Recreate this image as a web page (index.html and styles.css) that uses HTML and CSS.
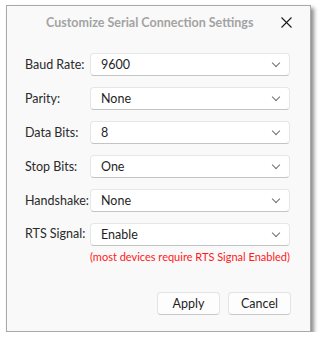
FILE: index.html
```html
<!DOCTYPE html>
<html lang="en">
<head>
  <meta charset="UTF-8" />
  <title>Customize Serial Connection Settings</title>
  <link rel="stylesheet" href="styles.css">
</head>
<body>
  <div class="ventana">
    <div class="barra">
      <span class="titulo">Customize Serial Connection Settings</span>
      <span class="cerrar">
        <svg width="11" height="11" viewBox="0 0 11 11">
          <path d="M0.5 0.5 L10.5 10.5 M10.5 0.5 L0.5 10.5" stroke="#1a1a1a" stroke-width="1.1" fill="none" />
        </svg>
      </span>
    </div>

    <div class="formulario">
      <label>Baud Rate:</label>
      <div class="combo"><span>9600</span><i class="flecha"></i></div>

      <label>Parity:</label>
      <div class="combo"><span>None</span><i class="flecha"></i></div>

      <label>Data Bits:</label>
      <div class="combo"><span>8</span><i class="flecha"></i></div>

      <label>Stop Bits:</label>
      <div class="combo"><span>One</span><i class="flecha"></i></div>

      <label>Handshake:</label>
      <div class="combo"><span>None</span><i class="flecha"></i></div>

      <label class="arriba">RTS Signal:</label>
      <div class="grupo">
        <div class="combo"><span>Enable</span><i class="flecha"></i></div>
        <p class="aviso">(most devices require RTS Signal Enabled)</p>
      </div>
    </div>

    <div class="botones">
      <button>Apply</button>
      <button>Cancel</button>
    </div>
  </div>
</body>
</html>
```

FILE: styles.css
```css
* {
  box-sizing: border-box;
  margin: 0;
  padding: 0;
  font-family: 'Lato', sans-serif;
}

body {
  background: #ffffff;
  color: #1f1f1f;
  font-size: 12.5px;
}

.ventana {
  margin: 5px 0 0 6px;
  width: 305px;
  height: 327px;
  background-color: #f9f9f9;
  border: 1px solid #a9a9a9;
  box-shadow: 3px 3px 4px rgba(0, 0, 0, 0.45);
  display: flex;
  flex-direction: column;
}

.barra {
  flex-shrink: 0;
  height: 47px;
  display: flex;
  align-items: center;
  padding: 0 0 14px 39px;
}

.titulo {
  flex: 1;
  font-weight: bold;
  font-size: 12.5px;
  color: #a3a3a3;
}

.cerrar {
  width: 11px;
  height: 11px;
  margin-right: 18px;
  display: flex;
}

.formulario {
  flex-shrink: 0;
  display: grid;
  grid-template-columns: 65px 200px;
  grid-auto-rows: 23px;
  row-gap: 11px;
  padding-left: 18px;
  align-items: center;
}

.formulario label {
  color: #2a2a2a;
  white-space: nowrap;
}

.formulario label.arriba {
  margin-top: -2px;
}

.grupo {
  align-self: start;
  height: 23px;
}

.combo {
  height: 23px;
  background: #ffffff;
  border: 1px solid #e6e6e6;
  border-bottom-color: #c4c4c4;
  border-radius: 4px;
  display: flex;
  align-items: center;
  justify-content: space-between;
  padding: 0 10px 0 10px;
}

.flecha {
  width: 6px;
  height: 6px;
  border-right: 1px solid #707070;
  border-bottom: 1px solid #707070;
  transform: rotate(45deg);
  margin-top: -4px;
}

.aviso {
  color: #ff1a1a;
  font-size: 11px;
  margin-top: 4px;
  white-space: nowrap;
}

.botones {
  flex-shrink: 0;
  display: flex;
  justify-content: flex-end;
  gap: 8px;
  padding: 46px 19px 0 0;
}

.botones button {
  width: 63px;
  height: 23px;
  background: #fdfdfd;
  border: 1px solid #e3e3e3;
  border-bottom-color: #c8c8c8;
  border-radius: 4px;
  font-family: 'Lato', sans-serif;
  font-size: 12.5px;
  color: #1f1f1f;
}
```
